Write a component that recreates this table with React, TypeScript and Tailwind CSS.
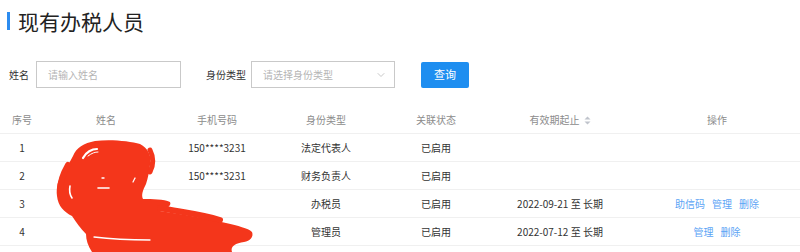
import { ChevronDown } from "lucide-react";

type Row = {
  no: number;
  phone: string;
  kind: string;
  status: string;
  period: string;
  actions: string[];
};

const rows: Row[] = [
  { no: 1, phone: "150****3231", kind: "法定代表人", status: "已启用", period: "", actions: [] },
  { no: 2, phone: "150****3231", kind: "财务负责人", status: "已启用", period: "", actions: [] },
  { no: 3, phone: "", kind: "办税员", status: "已启用", period: "2022-09-21 至 长期", actions: ["助信码", "管理", "删除"] },
  { no: 4, phone: "", kind: "管理员", status: "已启用", period: "2022-07-12 至 长期", actions: ["管理", "删除"] },
];

function SortIcon() {
  return (
    <svg width="7" height="9" viewBox="0 0 7 9" className="ml-1 inline-block align-[-1px]">
      <path d="M3.5 0.5 L6.5 3.5 L0.5 3.5 Z" fill="#c0c4cc" />
      <path d="M3.5 8.5 L6.5 5.5 L0.5 5.5 Z" fill="#c0c4cc" />
    </svg>
  );
}

// red redaction scribble drawn over the name column
function Scribble() {
  const red = "#f4361b";
  return (
    <svg width="800" height="252" viewBox="0 0 800 252" className="pointer-events-none absolute left-0 top-0">
      <path
        fill={red}
        d="M73 156 C 76 148, 84 143, 95 141 C 110 139, 130 141, 140 144 C 148 148, 152 156, 150 165
           C 149 172, 148 178, 146 184 C 143 190, 141 195, 143 199 C 152 199, 164 199, 170 202
           C 172 206, 166 209, 160 211 C 180 214, 205 218, 226 223 C 238 226, 248 228, 252 232
           C 254 237, 250 241, 244 242 C 236 243, 230 246, 232 252 L 92 252
           C 88 246, 86 240, 86 234 C 80 228, 76 222, 72 216 C 64 212, 58 206, 57 196
           C 56 188, 58 180, 62 174 C 66 168, 70 162, 73 156 Z"
      />
      <g fill="none" stroke={red} strokeLinecap="round">
        <path d="M68 165 C 64 172, 60 182, 60 190" strokeWidth="6" />
        <path d="M150 150 C 154 158, 153 166, 150 172" strokeWidth="5" />
        <path d="M160 208 C 180 212, 200 214, 220 220" strokeWidth="6" />
      </g>
      <g fill="none" stroke="#ffffff" strokeLinecap="round">
        <path d="M83 158 C 86 152, 92 149, 97 149" strokeWidth="2.2" />
        <path d="M88 156 C 92 153, 95 152, 98 152" strokeWidth="1" />
        <path d="M98 188 L 109 188" strokeWidth="1.6" />
        <path d="M102 178 L 104 178" strokeWidth="1.4" />
        <path d="M133 182 L 135 178" strokeWidth="1.2" />
        <path d="M70 186 C 69 191, 70 195, 72 198" strokeWidth="1.6" />
        <path d="M94 237 C 110 239, 130 240, 150 240" strokeWidth="1.3" />
      </g>
    </svg>
  );
}

export default function App() {
  return (
    <div
      className="relative h-[252px] w-[800px] overflow-hidden bg-white text-[#333]"
      style={{ fontFamily: '"Noto Sans CJK SC", "Noto Sans", sans-serif' }}
    >
      <div className="flex h-[42px] items-center pl-[7px]">
        <span className="h-[18px] w-[3px] bg-[#2d8cf0]" />
        <h1 className="ml-[8px] text-[21px] leading-none text-[#222]">现有办税人员</h1>
      </div>

      <div className="mt-[19px] flex items-center pl-[9px] text-[10px]">
        <span>姓名</span>
        <div className="ml-[7px] flex h-[27px] w-[145px] items-center border border-[#c9c9c9] px-[11px] text-[#b5b5b5]">
          请输入姓名
        </div>
        <span className="ml-[25px]">身份类型</span>
        <div className="ml-[5px] flex h-[27px] w-[144px] items-center justify-between border border-[#c9c9c9] pl-[11px] pr-[7px] text-[#b5b5b5]">
          请选择身份类型
          <ChevronDown className="h-3 w-3 text-[#b5b5b5]" strokeWidth={1.5} />
        </div>
        <button className="ml-[26px] flex h-[26px] w-[48px] items-center justify-center rounded-[2px] bg-[#1e8ef0] text-[11px] text-white">
          查询
        </button>
      </div>

      <table className="mt-[18px] w-[800px] table-fixed border-collapse text-center text-[10px]">
        <colgroup>
          <col className="w-[44px]" />
          <col className="w-[124px]" />
          <col className="w-[98px]" />
          <col className="w-[120px]" />
          <col className="w-[100px]" />
          <col className="w-[148px]" />
          <col className="w-[166px]" />
        </colgroup>
        <thead>
          <tr className="h-[27px] border-b border-[#f0f0f0] text-[#8c8c8c]">
            <th className="font-normal">序号</th>
            <th className="font-normal">姓名</th>
            <th className="font-normal">手机号码</th>
            <th className="font-normal">身份类型</th>
            <th className="font-normal">关联状态</th>
            <th className="font-normal">
              有效期起止
              <SortIcon />
            </th>
            <th className="font-normal">操作</th>
          </tr>
        </thead>
        <tbody>
          {rows.map((r) => (
            <tr key={r.no} className="h-[28px] border-b border-[#f0f0f0]">
              <td>{r.no}</td>
              <td />
              <td>{r.phone}</td>
              <td>{r.kind}</td>
              <td>{r.status}</td>
              <td>{r.period}</td>
              <td>
                <div className="flex justify-center gap-[7px] text-[#5ba4f5]">
                  {r.actions.map((a) => (
                    <span key={a}>{a}</span>
                  ))}
                </div>
              </td>
            </tr>
          ))}
        </tbody>
      </table>

      <Scribble />
    </div>
  );
}
